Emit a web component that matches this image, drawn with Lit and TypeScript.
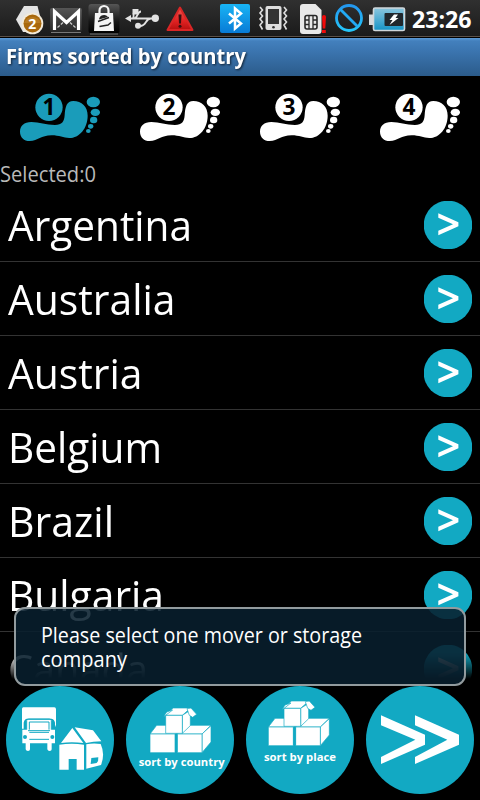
import { LitElement, html, svg, css } from "lit";
import { customElement, property } from "lit/decorators.js";

/** Text squeezed or stretched to an exact advance width. */
const fitted = (text: string, width: number, size: number, height: number, baseline: number) => html`
  <svg class="fit" width=${width + 8} height=${height} viewBox="0 0 ${width + 8} ${height}">
    <text x="0" y=${baseline} font-size=${size} textLength=${width} lengthAdjust="spacingAndGlyphs">${text}</text>
  </svg>`;

@customElement("status-bar")
export class StatusBar extends LitElement {
  static styles = css`
    :host { display: flex; height: 38px; background: linear-gradient(#303030, #1b1b1b 35px, #191919 36px, #5a5048 36px, #5a5048 37px, #000 37px); }
    svg { display: block; flex: none; font-family: "Open Sans", "Noto Sans", sans-serif; font-weight: 700; }
  `;

  private slotIcon(x: number, w: number, body: unknown) {
    return html`<svg width=${w} height="36" viewBox="${x} 0 ${w} 36">${body}</svg>`;
  }

  render() {
    return html`
      ${this.slotIcon(0, 46, svg`
        <path d="M24 6H37.500L40 16 36 32H23L16 19.500Z" fill="#e4e4e4"/>
        <circle cx="32.500" cy="23.500" r="10.800" fill="#f3ead9"/>
        <circle cx="32.500" cy="23.500" r="9" fill="#a9680c"/>
        <path d="M24 23a9 9 0 0 1 17 0z" fill="#b67a22"/>
        <text x="32.300" y="28.800" font-size="14" text-anchor="middle" fill="#fff">2</text>`)}
      ${this.slotIcon(46, 40, svg`
        <defs><linearGradient id="m" x1="0" y1="0" x2="0" y2="1"><stop offset="0" stop-color="#555"/><stop offset="1" stop-color="#262626"/></linearGradient></defs>
        <rect x="50" y="8" width="32" height="24" rx="2" fill="url(#m)"/>
        <path d="M51 32.500H81" stroke="#777" stroke-width="1"/>
        <path d="M54.500 30V11.500L66.500 22.500 78.500 11.500V30" fill="none" stroke="#fff" stroke-width="3.200"/>
        <path d="M57.500 27.500L63 22.500M75.500 27.500L70 22.500" fill="none" stroke="#ccc" stroke-width="1.200" stroke-dasharray="3 1.500"/>`)}
      ${this.slotIcon(86, 36, svg`
        <defs><linearGradient id="k" x1="0" y1="0" x2="0" y2="1"><stop offset="0" stop-color="#565656"/><stop offset=".6" stop-color="#151515"/><stop offset="1" stop-color="#000"/></linearGradient></defs>
        <rect x="88.500" y="4" width="31" height="29.500" rx="3" fill="url(#k)"/>
        <path d="M90 34H118" stroke="#777" stroke-width="1"/>
        <path d="M99.500 14V10.500a4.500 4.500 0 0 1 9 0V14" fill="none" stroke="#f5f5f5" stroke-width="2.200"/>
        <path d="M95 13H113L114 31H94Z" fill="#f5f5f5"/>
        <path d="M99 19.500a5 5 0 0 1 9-2.500Z" fill="#222"/>
        <path d="M98 21.500L109 17.500M99.500 26.500L108 25 111 22.500" stroke="#222" stroke-width="1.400" fill="none"/>`)}
      ${this.slotIcon(122, 41, svg`
        <g fill="none" stroke="#e2e2e2" stroke-width="1.800"><path d="M130 18.500H153M131.500 18.500C136 18.500 131 11.700 136 11.700M134 18.500C138 18 137 11.500 141 11.500M140 26C147 26 145 18.500 151 18.500"/></g>
        <g fill="#e2e2e2"><path d="M125 18.500L131 15V22Z"/><rect x="132.500" y="9" width="6" height="5.500"/><circle cx="155.300" cy="18.300" r="3.700"/><circle cx="138" cy="25.800" r="3"/></g>`)}
      ${this.slotIcon(163, 52, svg`
        <defs><linearGradient id="w" x1="0" y1="0" x2="0" y2="1"><stop offset="0" stop-color="#f15a50"/><stop offset=".6" stop-color="#e02222"/><stop offset="1" stop-color="#b80f0f"/></linearGradient></defs>
        <path d="M180 7.500L192.500 30H167.500Z" fill="url(#w)" stroke="#d92626" stroke-width="2" stroke-linejoin="round"/>
        <path d="M178.500 14.500H181.500L181 23.500H179Z" fill="#391010"/><circle cx="180" cy="26.300" r="1.500" fill="#391010"/>`)}
      ${this.slotIcon(215, 40, svg`
        <defs><linearGradient id="b" x1="0" y1="0" x2="0" y2="1"><stop offset="0" stop-color="#18b4f5"/><stop offset="1" stop-color="#087bd6"/></linearGradient></defs>
        <rect x="220" y="4" width="30" height="29" rx="2" fill="url(#b)"/>
        <path d="M229 13.500L241 23.500 235 28.500V8.500L241 13.500 229 23.500" fill="none" stroke="#fff" stroke-width="2.500"/>`)}
      ${this.slotIcon(255, 37, svg`
        <rect x="265.500" y="6" width="16" height="24" rx="2" fill="#dedede"/>
        <rect x="268" y="9" width="11" height="15" fill="#333"/><circle cx="273.500" cy="27.200" r="1.300" fill="#333"/>
        <path d="M260 7L262.500 10 260 13 262.500 16 260 19 262.500 22 260 25 262.500 29.500M284 7L286.500 10 284 13 286.500 16 284 19 286.500 22 284 25 286.500 29.500" fill="none" stroke="#dedede" stroke-width="1.600"/>`)}
      ${this.slotIcon(292, 38, svg`
        <path d="M303 4H315.500L321.500 10V31a3 3 0 0 1-3 3H303a3 3 0 0 1-3-3V7a3 3 0 0 1 3-3Z" fill="#e8e8e8"/>
        <rect x="305" y="15.500" width="12" height="13.500" rx="2" fill="none" stroke="#292929" stroke-width="1.600"/>
        <path d="M305 20H309V29M305 24.500H309M317 20H313V15.500M317 24.500H313V20M309 15.500V20M313 24V29" fill="none" stroke="#292929" stroke-width="1.300"/>
        <path d="M322 17a2 2 0 0 1 4 0L325.300 28.500H322.700Z" fill="#f00a0a"/><rect x="322" y="30" width="3.800" height="3" fill="#f00a0a"/>`)}
      ${this.slotIcon(330, 36, svg`
        <defs><linearGradient id="n" x1="0" y1="0" x2="0" y2="1"><stop offset="0" stop-color="#2397ee"/><stop offset="1" stop-color="#25c6fa"/></linearGradient></defs>
        <circle cx="349" cy="18" r="12.500" fill="none" stroke="url(#n)" stroke-width="2.800"/>
        <path d="M340.500 9.500L357.500 26.500" stroke="#22aaf3" stroke-width="2.800"/>`)}
      ${this.slotIcon(366, 42, svg`
        <defs><linearGradient id="l" x1="0" y1="0" x2="0" y2="1"><stop offset="0" stop-color="#8cc6de"/><stop offset="1" stop-color="#1493c6"/></linearGradient></defs>
        <path d="M369 14.500H374V25H369Z" fill="#d5d9dc"/>
        <rect x="373.500" y="8" width="31" height="22.500" rx="1.500" fill="url(#l)" stroke="#cfd6da" stroke-width="1.600"/>
        <rect x="384.500" y="13" width="18.500" height="13" rx="1" fill="#20272d"/>
        <path d="M394 14.500H398L395.500 18H398.500L389.500 25 392.500 20H389.500Z" fill="#fff"/>`)}
      ${this.slotIcon(408, 72, svg`
        <text x="412" y="27.500" font-size="23.500" fill="#fff" textLength="59.500" lengthAdjust="spacingAndGlyphs">23:26</text>`)}
    `;
  }
}

@customElement("step-foot")
export class StepFoot extends LitElement {
  @property({ type: Number }) step = 1;
  @property({ type: Boolean, reflect: true }) active = false;

  static styles = css`
    :host { display: block; width: 120px; height: 80px; color: #fff; }
    :host([active]) { color: #1a9cba; }
    svg { display: block; font-family: "Open Sans", "Noto Sans", sans-serif; font-weight: 700; }
  `;

  render() {
    return html`<svg width="120" height="80" viewBox="0 0 360 240" fill="currentColor">
      <circle cx="147" cy="82" r="41"/>
      <path d="M60 155C60 138 72 126 94 126C118 126 138 135 165 135C186 135 193 125 194 105C196 80 200 63 220 63C245 63 263 80 263 107C263 145 238 174 208 174C190 174 178 166 155 166C122 166 115 183 89 183C72 183 60 172 60 155Z"/>
      <ellipse cx="280" cy="66" rx="20" ry="16"/><ellipse cx="286" cy="97" rx="14" ry="11"/>
      <ellipse cx="281" cy="120" rx="11" ry="10"/><ellipse cx="272" cy="139" rx="8" ry="7"/><ellipse cx="265" cy="153" rx="7" ry="6"/>
      <text x="147" y="106" font-size="68" text-anchor="middle" fill="#000">${this.step}</text>
    </svg>`;
  }
}

@customElement("country-row")
export class CountryRow extends LitElement {
  @property() name = "";
  @property({ type: Number }) span = 100;

  static styles = css`
    :host { display: flex; justify-content: space-between; align-items: flex-start; box-sizing: border-box; height: 74px; flex: none; padding: 0 8px; border-bottom: 1px solid #333; }
    svg { display: block; }
    .go { margin-top: 13px; }
    .fit { overflow: visible; fill: #fff; font-family: "Open Sans", "Noto Sans", sans-serif; }
  `;

  render() {
    return html`
      ${fitted(this.name, this.span, 42, 73, 53)}
      <svg class="go" width="48" height="48" viewBox="0 0 48 48">
        <circle cx="24" cy="24" r="24.300" fill="#12a9c3"/>
        <path d="M14.300 12.300L34.400 21.300V25.300L14.300 34.200V29.800L29 23.300 14.300 16.700Z" fill="#fff"/>
      </svg>`;
  }
}

const truckAndHouse = svg`
  <g fill="#fff">
    <path d="M70 82H163Q168 82 168 88V134L165 142V128Q163 117 155 116H80Q73 117 71 128V146H66V87Q66 82 70 82Z"/>
    <path d="M82 119H152Q155 119 155 123V149H165V190H155V208Q155 213 149 213T142 208V190H90V208Q90 213 84 213T77 208V190H67V149H79V123Q79 119 82 119Z"/>
    <path d="M217 144L183 189Q215 184 250 189Z"/><path d="M224 142L279 151 304 184Q280 184 258 189Z"/>
    <path d="M178 194Q215 189 252 194V269H230V237H206V269H178Z"/>
    <path d="M259 193Q280 188 302 192Q316 222 303 255L259 266Z"/>
  </g>
  <g fill="#12a9c3"><circle cx="75" cy="171" r="6"/><circle cx="157" cy="171" r="6"/>
    <path d="M274 234L295 232Q296 244 290 249L272 252Z"/></g>
  <path d="M80 149V122Q80 117 86 117H148Q154 117 154 122V149M88 149V126H147V149M84 152H150M88 157H147M88 178H147" fill="none" stroke="#12a9c3" stroke-width="3"/>`;

const boxes = svg`
  <g fill="#fff" stroke="#12a9c3" stroke-width="2" stroke-linejoin="round">
    <path d="M90 162L110 136H191L165 162Z"/><path d="M172 162L197 136H273L246 162Z"/>
    <path d="M246 162L273 137V186L246 218Z"/>
    <path d="M90 162H165V218H90ZM172 162H246V218H172Z"/>
    <path d="M137 106L159 84H212L187 106Z"/><path d="M187 106L211 91V137L187 160Z"/>
    <path d="M137 106H187V160H137Z"/><path d="M201 86L213 84 230 103 218 112 208 106Z"/>
    <path d="M137 106L131 110 140 96 158 90Z"/>
  </g>
  <path d="M165 163V218H172V163Z" fill="#12a9c3"/>`;

@customElement("app-root")
export class AppRoot extends LitElement {
  private countries: [string, number][] = [
    ["Argentina", 184], ["Australia", 167.500], ["Austria", 134.500], ["Belgium", 154],
    ["Brazil", 106], ["Bulgaria", 156], ["Canada", 140],
  ];

  static styles = css`
    :host { display: flex; flex-direction: column; position: relative; width: 480px; height: 800px; overflow: hidden; background: #000; font-family: "Open Sans", "Noto Sans", sans-serif; }
    svg { display: block; }
    .fit { overflow: visible; }
    .title { height: 38px; flex: none; padding-left: 6px; background: linear-gradient(#5a99d6, #4380bd 3px, #3c76b1 12px, #2b5b8a); }
    .title .fit { fill: #fff; font-weight: 700; filter: drop-shadow(1px 1px 1px #000a); }
    .steps { display: flex; height: 80px; flex: none; padding-top: 4px; }
    .selected { height: 28px; flex: none; }
    .selected .fit { fill: #b9b9b9; }
    .list { display: flex; flex-direction: column; height: 492px; flex: none; overflow: hidden; mask-image: linear-gradient(#000 465px, transparent 491px); }
    .actions { display: flex; height: 120px; flex: none; }
    .actions text { font-weight: 700; fill: #fff; }
    .toast { position: absolute; left: 14px; top: 607px; width: 452px; height: 79px; box-sizing: border-box; padding: 13px 0 0 25px; border: 2px solid #929b9e; border-radius: 11px; background: rgba(8, 31, 45, 0.880); }
    .toast .fit { fill: #fff; }
  `;

  private action(body: unknown) {
    return html`<svg width="120" height="120" viewBox="0 0 360 360"><circle cx="180" cy="180" r="162" fill="#12a9c3"/>${body}</svg>`;
  }

  render() {
    return html`
      <status-bar></status-bar>
      <div class="title">${fitted("Firms sorted by country", 240, 21, 38, 26)}</div>
      <div class="steps">${[1, 2, 3, 4].map((n) => html`<step-foot .step=${n} ?active=${n === 1}></step-foot>`)}</div>
      <div class="selected">${fitted("Selected:0", 96, 21.5, 28, 22)}</div>
      <div class="list">${this.countries.map(([name, span]) => html`<country-row .name=${name} .span=${span}></country-row>`)}</div>
      <div class="actions">
        ${this.action(truckAndHouse)}
        ${this.action(svg`${boxes}<text x="56" y="258" font-size="32" textLength="258" lengthAdjust="spacingAndGlyphs">sort by country</text>`)}
        ${this.action(svg`<g transform="translate(-5 -21)">${boxes}</g><text x="72" y="243" font-size="32" textLength="216" lengthAdjust="spacingAndGlyphs">sort by place</text>`)}
        ${this.action(svg`<path d="M63 106L195 164V194L63 252V231L166 179 63 136ZM165 106L297 164V194L165 252V231L262 179 165 136Z" fill="#fff"/>`)}
      </div>
      <div class="toast">
        ${fitted("Please select one mover or storage", 321, 21.5, 24, 21)}
        ${fitted("company", 86, 21.5, 24, 21)}
      </div>`;
  }
}
